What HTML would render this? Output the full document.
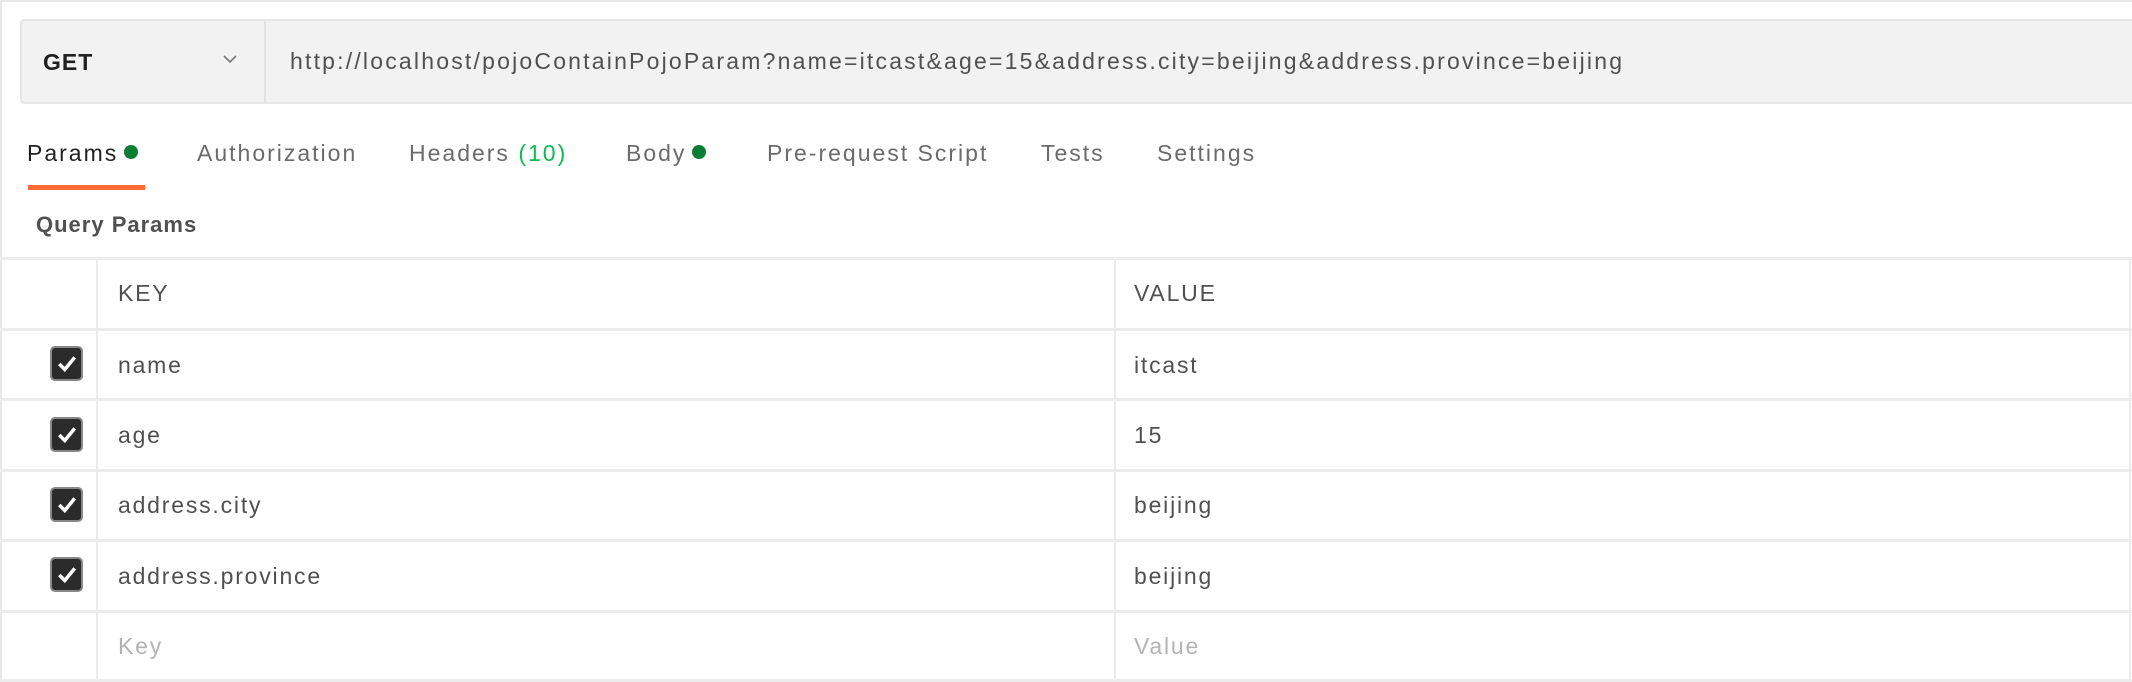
<!DOCTYPE html>
<html><head><meta charset="utf-8"><style>
*{margin:0;padding:0;box-sizing:border-box}
body{width:2132px;height:682px;background:#fff;font-family:"Liberation Sans",sans-serif;position:relative;overflow:hidden;color:#505050}
.frame{position:absolute;left:0;top:0;width:2132px;height:682px;border-top:2px solid #e8e8e8;border-left:2px solid #e8e8e8}
.url{position:absolute;left:20px;top:19px;width:2130px;height:85px;background:#f2f2f2;border:2px solid #e6e6e6;border-radius:4px}
.get{position:absolute;left:43px;top:49px;font-size:23px;font-weight:bold;color:#212121;letter-spacing:1px}
.chev{position:absolute;left:222px;top:53px}
.sep{position:absolute;left:264px;top:21px;width:2px;height:81px;background:#e2e2e2}
.utext{position:absolute;left:290px;top:48px;font-size:23px;color:#505050;letter-spacing:2.2px;white-space:nowrap}
.tab{position:absolute;top:140px;font-size:23px;color:#6b6b6b;letter-spacing:2px;white-space:nowrap}
.dot{display:inline-block;width:14px;height:14px;border-radius:50%;background:#0a7d35;margin-left:6px;vertical-align:2px}
.ul{position:absolute;left:28px;top:185px;width:117px;height:5px;background:#ff6c37}
.qp{position:absolute;left:36px;top:212px;font-size:22px;font-weight:bold;color:#505050;letter-spacing:1px}
.hl{position:absolute;left:0;width:2132px;height:3px;background:#ececec}
.vl{position:absolute;top:258px;width:2px;height:424px;background:#ececec}
.cell{position:absolute;font-size:23px;color:#505050;letter-spacing:1.8px;white-space:nowrap}
.cb{position:absolute;left:50px;width:33px;height:35px;background:#2b2b2b;border-radius:5px;border:2px solid #888}
.cb svg{position:absolute;left:4px;top:5px}
</style></head><body>
<div class="frame"></div>
<div class="url"></div>
<div class="get">GET</div>
<svg class="chev" width="16" height="12" viewBox="0 0 16 12"><path d="M2 3 L8 9 L14 3" fill="none" stroke="#777" stroke-width="1.6"/></svg>
<div class="sep"></div>
<div class="utext">http://localhost/pojoContainPojoParam?name=itcast&amp;age=15&amp;address.city=beijing&amp;address.province=beijing</div>
<div class="tab" style="left:27px;color:#212121">Params<span class="dot"></span></div>
<div class="tab" style="left:197px">Authorization</div>
<div class="tab" style="left:409px">Headers <span style="color:#0cbb52">(10)</span></div>
<div class="tab" style="left:626px">Body<span class="dot"></span></div>
<div class="tab" style="left:767px">Pre-request Script</div>
<div class="tab" style="left:1041px">Tests</div>
<div class="tab" style="left:1157px">Settings</div>
<div class="ul"></div>
<div class="qp">Query Params</div>
<div class="hl" style="top:257px"></div>
<div class="hl" style="top:328px"></div>
<div class="hl" style="top:398px"></div>
<div class="hl" style="top:469px"></div>
<div class="hl" style="top:539px"></div>
<div class="hl" style="top:610px"></div>
<div class="hl" style="top:679px"></div>
<div class="vl" style="left:96px"></div>
<div class="vl" style="left:1114px"></div>
<div class="vl" style="left:2129px"></div>
<div class="cell" style="left:118px;top:280px">KEY</div>
<div class="cell" style="left:1134px;top:280px">VALUE</div>
<div class="cb" style="top:346px"><svg width="22" height="22" viewBox="0 0 20 20"><path d="M3 10 L8 15 L17 4" fill="none" stroke="#fff" stroke-width="3.2"/></svg></div>
<div class="cb" style="top:417px"><svg width="22" height="22" viewBox="0 0 20 20"><path d="M3 10 L8 15 L17 4" fill="none" stroke="#fff" stroke-width="3.2"/></svg></div>
<div class="cb" style="top:487px"><svg width="22" height="22" viewBox="0 0 20 20"><path d="M3 10 L8 15 L17 4" fill="none" stroke="#fff" stroke-width="3.2"/></svg></div>
<div class="cb" style="top:557px"><svg width="22" height="22" viewBox="0 0 20 20"><path d="M3 10 L8 15 L17 4" fill="none" stroke="#fff" stroke-width="3.2"/></svg></div>
<div class="cell" style="left:118px;top:352px">name</div>
<div class="cell" style="left:1134px;top:352px">itcast</div>
<div class="cell" style="left:118px;top:422px">age</div>
<div class="cell" style="left:1134px;top:422px">15</div>
<div class="cell" style="left:118px;top:492px">address.city</div>
<div class="cell" style="left:1134px;top:492px">beijing</div>
<div class="cell" style="left:118px;top:563px">address.province</div>
<div class="cell" style="left:1134px;top:563px">beijing</div>
<div class="cell" style="left:118px;top:633px;color:#b3b3b3">Key</div>
<div class="cell" style="left:1134px;top:633px;color:#b3b3b3">Value</div>
</body></html>
